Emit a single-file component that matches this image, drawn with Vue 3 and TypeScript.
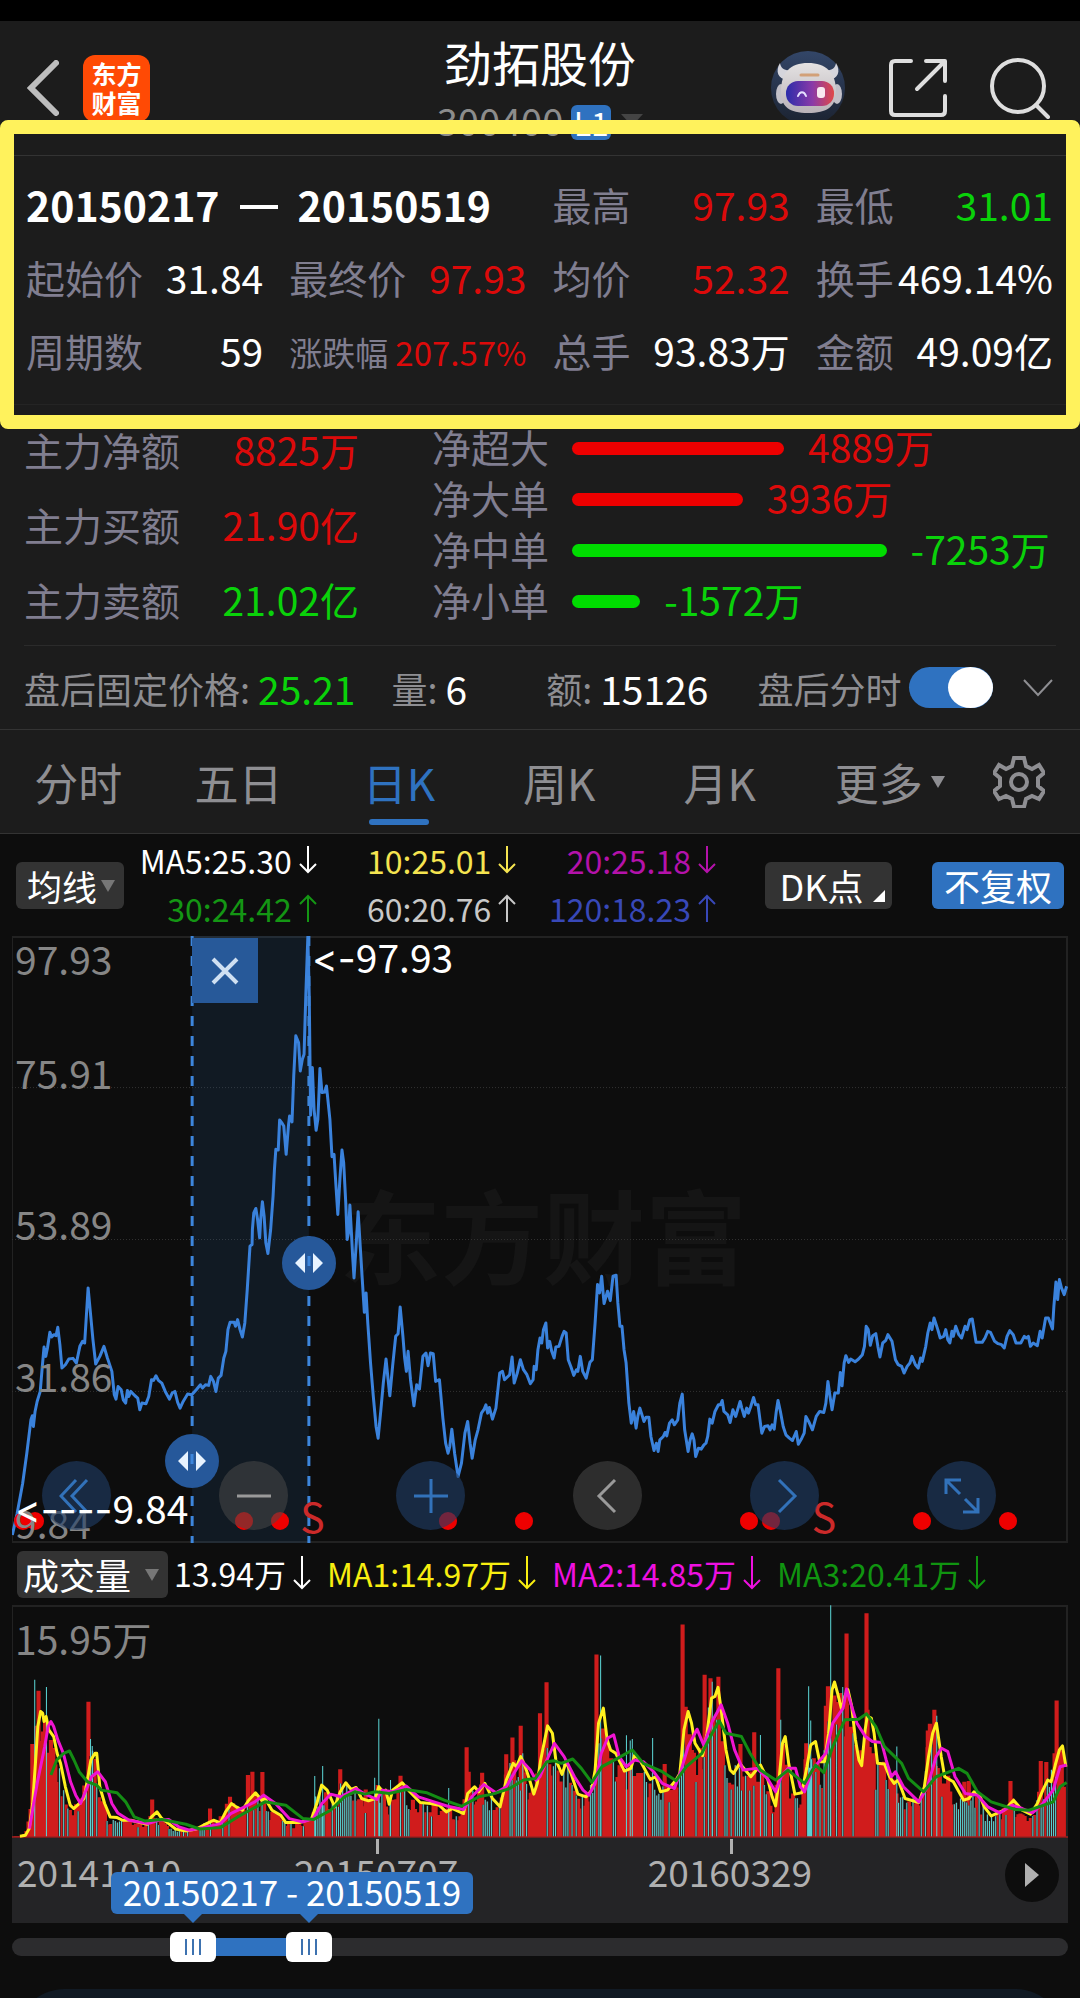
<script setup lang="ts">
import { computed, ref } from 'vue'

type Tone = 'up' | 'down' | 'plain'
interface Stat { label: string; value: string; tone: Tone; small?: boolean }
interface Flow { label: string; amount: number }
type Point = [number, number]

const stats: Stat[] = [
  { label: '最高', value: '97.93', tone: 'up' },
  { label: '最低', value: '31.01', tone: 'down' },
  { label: '起始价', value: '31.84', tone: 'plain' },
  { label: '最终价', value: '97.93', tone: 'up' },
  { label: '均价', value: '52.32', tone: 'up' },
  { label: '换手', value: '469.14%', tone: 'plain' },
  { label: '周期数', value: '59', tone: 'plain' },
  { label: '涨跌幅', value: '207.57%', tone: 'up', small: true },
  { label: '总手', value: '93.83万', tone: 'plain' },
  { label: '金额', value: '49.09亿', tone: 'plain' },
]

const mainFunds: Stat[] = [
  { label: '主力净额', value: '8825万', tone: 'up' },
  { label: '主力买额', value: '21.90亿', tone: 'up' },
  { label: '主力卖额', value: '21.02亿', tone: 'down' },
]

const flows: Flow[] = [
  { label: '净超大', amount: 4889 },
  { label: '净大单', amount: 3936 },
  { label: '净中单', amount: -7253 },
  { label: '净小单', amount: -1572 },
]
const largestFlow = Math.max(...flows.map((f) => Math.abs(f.amount)))
const flowWidth = (f: Flow) => `${(Math.abs(f.amount) / largestFlow) * 65}%`

const tabs = ['分时', '五日', '日K', '周K', '月K']
const activeTab = ref('日K')
const afterHours = ref(true)

const averages = [
  { text: 'MA5:25.30', up: false, color: '#ffffff' },
  { text: '10:25.01', up: false, color: '#f5e450' },
  { text: '20:25.18', up: false, color: '#b412aa' },
  { text: '30:24.42', up: true, color: '#149614' },
  { text: '60:20.76', up: true, color: '#c8c8c8' },
  { text: '120:18.23', up: true, color: '#3848b8' },
]
const volumeAverages = [
  { text: '13.94万', color: '#ffffff' },
  { text: 'MA1:14.97万', color: '#f8ee10' },
  { text: 'MA2:14.85万', color: '#ee10e0' },
  { text: 'MA3:20.41万', color: '#109410' },
]

const priceTicks = [
  { text: '97.93', top: 0 },
  { text: '75.91', top: 114 },
  { text: '53.89', top: 265 },
  { text: '31.86', top: 417 },
  { text: '9.84', top: 564 },
]

/* Both charts use a grid of 3066 units across; heights are 1818 and 696 units. */
const priceLine =
  '36,2115 50,2050 66,1960 78,1870 90,1770 94,1758 97,1790 102,1745 108,1715 117,1685 123,1610 128,1552 133,1580 138,1555 145,1508 150,1522 157,1515 163,1518 168,1493 174,1545 180,1615 190,1605 200,1588 212,1586 222,1600 232,1550 240,1535 246,1540 256,1375 260,1420 270,1530 278,1603 290,1580 302,1550 312,1585 325,1625 332,1695 337,1708 343,1670 352,1680 358,1710 365,1720 370,1682 374,1700 380,1685 392,1698 400,1705 406,1740 412,1720 424,1722 432,1700 440,1650 446,1652 453,1638 460,1652 470,1660 480,1685 492,1708 500,1690 508,1685 516,1718 523,1735 532,1715 545,1693 557,1695 570,1680 582,1665 588,1675 597,1665 606,1667 612,1640 620,1655 627,1685 634,1645 642,1637 650,1585 656,1565 662,1500 668,1478 680,1478 684,1490 690,1470 697,1500 704,1522 711,1480 718,1380 726,1250 732,1245 ' +
  '733,1200 737,1150 743,1137 748,1170 754,1225 757,1170 762,1117 767,1160 772,1240 778,1272 786,1200 793,1100 797,1020 801,960 808,962 812,872 818,880 824,890 831,975 838,885 841,860 848,878 853,740 859,620 867,640 872,725 878,690 883,675 888,500 894,322 898,500 902,858 907,715 912,840 918,903 923,870 926,800 929,718 935,790 943,788 948,770 958,870 964,982 970,975 975,1060 981,1155 987,1050 993,962 998,1000 1004,1120 1008,1230 1012,1210 1016,1127 1020,1200 1024,1280 1028,1345 1034,1250 1040,1147 1046,1250 1052,1350 1058,1448 1063,1390 1068,1480 1076,1600 1084,1700 1092,1790 1098,1825 1106,1740 1113,1660 1121,1588 1127,1650 1132,1698 1140,1610 1149,1520 1156,1512 1162,1432 1170,1520 1175,1585 1180,1625 1185,1565 1192,1650 1202,1728 1210,1665 1218,1678 1228,1580 1237,1570 1243,1608 1250,1570 1258,1572 1265,1655 1276,1650 1286,1765 1294,1840 1301,1870 1306,1850 1312,1798 1320,1870 1330,1940 1340,1900 1350,1810 1358,1775 1365,1840 1371,1885 1380,1830 1388,1800 1398,1750 1406,1738 1411,1725 1416,1750 1421,1733 1430,1768 1440,1735 1451,1630 1459,1625 1465,1650 1480,1635 1487,1582 1493,1660 1502,1630 1511,1590 1520,1620 1530,1635 1540,1662 1548,1650 1551,1610 1557,1620 1562,1560 ' +
  '1568,1525 1573,1540 1578,1500 1585,1480 1590,1555 1596,1535 1602,1565 1609,1585 1614,1552 1623,1550 1632,1520 1638,1505 1644,1510 1650,1590 1658,1612 1666,1637 1674,1620 1678,1625 1685,1580 1692,1625 1702,1645 1713,1598 1720,1590 1728,1480 1735,1365 1741,1390 1747,1340 1754,1422 1764,1385 1772,1413 1780,1340 1789,1337 1794,1420 1800,1490 1806,1490 1812,1560 1818,1600 1826,1720 1833,1780 1840,1745 1847,1795 1852,1760 1858,1735 1870,1775 1876,1762 1884,1762 1890,1820 1899,1862 1906,1840 1911,1865 1916,1830 1926,1820 1931,1808 1936,1818 1944,1780 1952,1770 1958,1785 1968,1770 1974,1720 1981,1693 1988,1800 1998,1865 2004,1830 2010,1812 2015,1830 2020,1880 2028,1855 2036,1858 2044,1845 2050,1840 2055,1820 2061,1768 2068,1780 2076,1745 2086,1725 2092,1725 2097,1712 2102,1745 2113,1755 2120,1778 2128,1740 2136,1760 2149,1715 2154,1735 2161,1760 2168,1735 2173,1750 2180,1730 2188,1703 2194,1725 2201,1725 2208,1780 2212,1810 2220,1790 2230,1788 2236,1800 2242,1785 2248,1798 2254,1745 2259,1712 2266,1745 2274,1790 2282,1815 2292,1825 2301,1832 2312,1805 2318,1843 2328,1825 2335,1810 2340,1760 2348,1775 2359,1800 2370,1760 2380,1745 2392,1748 2398,1720 2404,1655 2410,1700 2416,1740 2424,1690 2434,1690 2440,1628 2445,1668 2451,1600 2456,1578 2464,1598 2470,1588 2483,1596 2493,1588 2504,1575 2510,1550 2515,1490 2521,1500 2527,1547 2534,1518 2543,1512 2549,1550 2555,1582 2563,1540 2572,1532 2578,1515 2590,1535 2600,1590 2608,1605 2618,1610 2625,1630 2634,1610 2642,1600 2648,1580 2658,1605 2666,1615 2673,1585 2678,1595 2688,1550 2694,1510 2701,1480 2706,1500 2712,1465 2723,1500 2730,1525 2740,1520 2746,1500 2752,1530 2758,1540 2764,1505 2768,1520 2775,1490 2784,1515 2792,1525 2802,1490 2808,1500 2816,1470 2823,1468 2834,1538 2852,1538 2860,1525 2868,1505 2876,1508 2888,1535 2898,1542 2908,1545 2916,1555 2924,1520 2932,1503 2942,1515 2950,1540 2964,1540 2974,1520 2980,1525 2986,1520 2992,1550 3000,1540 3012,1548 3020,1505 3026,1525 3036,1465 3044,1465 3056,1498 3060,1430 3066,1357 3071,1410 3076,1350 3082,1375 3090,1395 3097,1370'

const shortAverage =
  '58,738 74,735 85,715 95,640 103,520 110,410 118,365 124,370 128,395 134,380 142,420 156,440 166,490 176,520 190,590 204,645 214,655 230,640 244,625 254,570 264,510 276,490 281,490 290,590 304,640 320,680 340,682 356,690 380,690 400,695 428,702 440,680 456,665 470,685 490,700 510,716 540,722 570,716 600,700 620,690 640,698 655,665 672,640 686,650 704,660 722,630 742,608 760,630 770,625 790,660 815,675 830,697 870,697 905,685 920,640 934,585 950,600 972,650 988,605 1004,578 1020,598 1034,592 1050,625 1070,632 1090,625 1100,590 1112,605 1120,600 1130,642 1140,600 1168,578 1190,605 1220,637 1250,640 1275,645 1296,665 1314,655 1346,670 1358,610 1378,590 1390,605 1408,580 1430,625 1452,650 1470,570 1490,520 1500,530 1512,500 1525,530 1538,570 1550,612 1560,580 1570,510 1590,408 1604,430 1614,510 1632,553 1644,515 1658,550 1678,612 1702,620 1718,600 1728,540 1738,400 1752,355 1763,450 1773,480 1788,490 1813,543 1832,535 1843,495 1858,510 1888,568 1904,560 1918,605 1938,600 1963,570 1974,550 1986,420 1998,365 2008,400 2018,460 2040,497 2053,430 2066,325 2076,320 2085,293 2094,360 2108,480 2120,540 2130,550 2148,520 2180,560 2208,525 2230,570 2242,620 2252,647 2262,570 2272,460 2280,440 2290,520 2308,612 2328,608 2343,530 2354,465 2368,455 2380,515 2394,515 2406,430 2416,300 2423,277 2432,310 2444,360 2453,320 2462,300 2473,350 2484,450 2494,510 2502,527 2512,420 2518,380 2530,385 2538,430 2548,520 2568,522 2583,560 2596,580 2608,570 2628,625 2668,637 2684,590 2696,500 2708,430 2719,400 2733,500 2743,560 2768,575 2798,630 2813,625 2828,605 2843,612 2858,650 2878,677 2898,668 2918,658 2943,630 2968,660 2992,672 3012,640 3028,600 3042,570 3052,575 3064,525 3076,480 3085,468 3095,530'
const midAverage =
  '86,715 96,650 110,570 130,470 140,410 148,395 156,410 168,450 184,490 205,575 220,615 234,640 250,600 266,560 284,545 306,575 325,640 342,668 375,690 430,700 460,690 490,688 520,710 550,720 590,712 640,700 670,670 700,655 740,635 766,615 800,640 840,685 880,695 910,685 935,640 960,612 990,620 1034,595 1060,612 1095,628 1110,600 1140,605 1180,588 1215,620 1260,635 1300,648 1346,658 1370,620 1405,583 1440,608 1470,590 1495,545 1515,512 1540,540 1556,570 1568,560 1588,510 1610,460 1638,500 1668,560 1693,600 1710,615 1728,580 1746,490 1764,445 1782,435 1798,500 1818,530 1843,510 1868,515 1898,545 1923,580 1958,595 1978,540 1998,470 2024,418 2043,465 2068,395 2094,345 2113,400 2133,480 2158,540 2198,535 2228,565 2252,605 2268,560 2288,535 2310,535 2324,590 2336,605 2358,540 2398,490 2418,400 2448,355 2458,298 2473,350 2488,400 2513,440 2533,455 2560,458 2573,510 2588,560 2600,545 2623,590 2668,635 2693,590 2718,500 2734,475 2752,485 2773,560 2803,610 2838,615 2868,650 2903,668 2938,645 2968,655 2998,668 3028,640 3058,600 3078,530 3097,525'
const longAverage =
  '148,555 165,510 185,490 202,483 215,510 230,545 254,575 280,585 295,600 340,608 365,635 390,680 420,692 470,688 540,702 580,716 640,712 690,680 770,635 830,645 880,685 910,688 960,660 1000,620 1030,605 1060,612 1090,605 1130,610 1180,598 1240,608 1290,630 1340,648 1390,620 1430,612 1480,595 1520,570 1555,565 1568,545 1588,515 1608,512 1630,520 1663,507 1688,535 1718,577 1748,530 1793,505 1836,480 1868,520 1923,545 1963,572 1993,530 2038,490 2068,430 2088,393 2108,430 2153,440 2178,490 2208,540 2252,570 2288,540 2336,580 2368,525 2392,548 2418,470 2453,390 2493,388 2516,372 2543,410 2568,470 2598,500 2618,520 2638,565 2682,605 2718,560 2783,535 2808,550 2838,605 2878,635 2948,658 2988,660 3058,635 3078,590 3097,577'

const risingPeaks: Point[] = [
  [94, 462], [106, 410], [112, 303], [148, 450], [257, 336], [442, 628], [610, 655], [668, 620], [720, 555], [733, 545], [762, 546],
  [988, 538], [1062, 598], [1163, 557], [1355, 472], [1361, 545], [1400, 548], [1470, 493], [1488, 443], [1512, 408], [1568, 370],
  [1587, 278], [1732, 195], [1748, 423], [1930, 522], [1982, 105], [2046, 255], [2063, 266], [2086, 261], [2150, 462],
  [2190, 427], [2260, 236], [2341, 460], [2398, 348], [2404, 290], [2441, 310], [2458, 132], [2516, 72], [2694, 422], [2700, 402],
  [2713, 360], [2800, 575], [2813, 573], [2934, 573], [3022, 513], [3038, 516], [3062, 490], [3068, 332],
]
const fallingPeaks: Point[] = [
  [101, 270], [135, 292], [263, 447], [268, 468], [914, 558], [937, 528], [1088, 563], [1100, 387], [1134, 570], [1303, 594],
  [1518, 490], [1744, 198], [1819, 436], [1830, 452], [1836, 447], [1895, 444], [2068, 276], [2208, 435], [2267, 390],
  [2348, 290], [2354, 392], [2412, 48], [2447, 292], [2604, 470], [2720, 378],
]

const floor = 740
const envelope: Point[] = shortAverage.split(' ').map((p) => p.split(',').map(Number) as Point)

function envelopeAt(x: number): number {
  const next = envelope.findIndex((p) => p[0] >= x)
  if (next <= 0) return next === 0 ? envelope[0][1] : envelope[envelope.length - 1][1]
  const [x0, y0] = envelope[next - 1]
  const [x1, y1] = envelope[next]
  return y0 + ((x - x0) / (x1 - x0)) * (y1 - y0)
}

/* Daily volume between the marked peaks follows the short average with a repeatable spread. */
let seed = 11
function nextRandom(): number {
  seed = (seed * 16807) % 2147483647
  return seed / 2147483647
}
const rising: Point[] = []
const falling: Point[] = []
for (let x = 41; x < 3092; x += 6) {
  const height = (floor - envelopeAt(x + 6)) * (0.6 + nextRandom() * 0.5)
  const run = Math.sin(x / 37) + Math.sin(x / 13)
  const bar: Point = [x, floor - height]
  if (x > 150 && nextRandom() < (run > 0.5 ? 0.7 : 0.22)) falling.push(bar)
  else rising.push(bar)
}
const toBars = (points: Point[], width: number) =>
  points.map(([x, y]) => `M${x - width / 2} ${floor}V${y.toFixed(0)}h${width}V${floor}z`).join('')
const risingBars = toBars([...rising, ...risingPeaks], 12)
const fallingBars = toBars([...falling, ...fallingPeaks], 3)
const fallingGaps = toBars(falling, 7)

const markers = [9, 21, 231, 267, 435, 511, 737, 759, 911, 997]
const signals = [288, 801]

const rangeStart = ref(1564)
const rangeEnd = ref(2713)
const selected = computed(() => ({
  left: `calc(23px + (100% - 46px) * ${rangeStart.value / 10000})`,
  width: `calc((100% - 46px) * ${(rangeEnd.value - rangeStart.value) / 10000})`,
}))
</script>

<template>
  <main class="page">
    <div class="status"></div>
    <header class="header">
      <div class="side">
        <button class="icon-button" aria-label="返回">
          <svg width="32" height="56" viewBox="0 0 32 56"><path d="M29 3 4 28l25 25" fill="none" stroke="#bdbdbd" stroke-width="6" stroke-linecap="round" /></svg>
        </button>
        <div class="logo"><span>东方</span><span>财富</span></div>
      </div>
      <div class="heading">
        <h1>劲拓股份</h1>
        <div class="code"><span>300400</span><b>L1</b><i class="caret"></i></div>
      </div>
      <div class="side end">
        <button class="icon-button" aria-label="智能助手">
          <svg width="76" height="76" viewBox="0 0 76 76">
            <defs>
              <linearGradient id="disc" x1="0" y1="0" x2="0" y2="1"><stop offset="0" stop-color="#334668" /><stop offset="1" stop-color="#1b2230" /></linearGradient>
              <linearGradient id="visor"><stop offset="0" stop-color="#2c2caa" /><stop offset=".55" stop-color="#8a3aa8" /><stop offset="1" stop-color="#e04848" /></linearGradient>
              <linearGradient id="shell" x1="0" y1="0" x2="0" y2="1"><stop offset="0" stop-color="#e4e2e2" /><stop offset="1" stop-color="#b9b2b8" /></linearGradient>
            </defs>
            <circle cx="38" cy="38" r="37" fill="url(#disc)" />
            <path d="M17 30C8 29 5 21 10 13c1 6 5 8 12 7zM59 30c9-1 12-9 7-17-1 6-5 8-12 7z" fill="#d5d5dc" />
            <ellipse cx="11" cy="44" rx="5" ry="10" fill="#c2c0c8" /><ellipse cx="67" cy="44" rx="5" ry="10" fill="#c2c0c8" />
            <path d="M11 41c0-18 9-28 27-28s28 10 28 28c0 16-9 22-28 22S11 57 11 41z" fill="url(#shell)" />
            <rect x="16" y="31" width="48" height="25" rx="12" fill="url(#visor)" />
            <path d="M28 46c2-5 6-5 8 0" fill="none" stroke="#e5e0ff" stroke-width="2" stroke-linecap="round" />
            <rect x="47" y="37" width="8" height="11" rx="3" fill="#f8e8f0" /><path d="M31 25h17" stroke="#d2a078" stroke-width="3" stroke-linecap="round" />
          </svg>
        </button>
        <button class="icon-button" aria-label="分享">
          <svg width="58" height="60" viewBox="0 0 58 60" fill="none" stroke="#dedede" stroke-width="4" stroke-linecap="round" stroke-linejoin="round">
            <path d="M22 3H6Q2 3 2 7v46q0 4 4 4h46q4 0 4-4V38M37 3h19v20M55 4 28 31" />
          </svg>
        </button>
        <button class="icon-button" aria-label="搜索">
          <svg width="60" height="62" viewBox="0 0 60 62" fill="none" stroke="#dedede" stroke-width="4" stroke-linecap="round">
            <circle cx="28" cy="29" r="26" /><path d="m46 48 12 12" />
          </svg>
        </button>
      </div>
    </header>

    <section class="stats">
      <div class="period"><strong>20150217</strong><i class="dash"></i><strong>20150519</strong></div>
      <div v-for="s in stats" :key="s.label" class="stat" :class="{ small: s.small }">
        <span>{{ s.label }}</span><b :class="s.tone">{{ s.value }}</b>
      </div>
    </section>

    <section class="funds">
      <div class="fund-column">
        <div v-for="f in mainFunds" :key="f.label" class="fund"><span>{{ f.label }}</span><b :class="f.tone">{{ f.value }}</b></div>
      </div>
      <div class="flow-column">
        <div v-for="f in flows" :key="f.label" class="flow" :class="f.amount > 0 ? 'up' : 'down'">
          <span>{{ f.label }}</span>
          <div class="track"><i :style="{ width: flowWidth(f) }"></i><b>{{ f.amount }}万</b></div>
        </div>
      </div>
    </section>

    <section class="after">
      <span>盘后固定价格:</span><b class="down">25.21</b>
      <span class="volume">量:</span><b>6</b>
      <span class="amount">额:</span><b>15126</b>
      <label for="after-hours">盘后分时</label>
      <input id="after-hours" v-model="afterHours" type="checkbox" class="toggle" />
      <button class="icon-button expand" aria-label="展开">
        <svg width="30" height="18" viewBox="0 0 30 18"><path d="m1 1 14 15L29 1" fill="none" stroke="#8e8e92" stroke-width="2" /></svg>
      </button>
    </section>

    <nav class="tabs">
      <button v-for="t in tabs" :key="t" :class="{ active: t === activeTab }" @click="activeTab = t">{{ t }}</button>
      <button class="more">更多<i class="caret"></i></button>
      <button class="gear" aria-label="设置">
        <svg width="52" height="52" viewBox="0 0 52 52" fill="none" stroke="#8e8e92" stroke-width="4">
          <path d="M21 2h10l2 8 6 3 7-4 5 8-6 5v8l6 5-5 8-7-3-6 3-2 8H21l-2-8-6-3-7 3-5-8 6-5v-8l-6-5 5-8 7 4 6-3z" /><circle cx="26" cy="26" r="8" />
        </svg>
      </button>
    </nav>

    <section class="charts">
      <div class="indicators">
        <div class="picker">
          <select aria-label="主图指标"><option>均线</option></select><i class="caret"></i>
        </div>
        <div class="averages">
          <span v-for="a in averages" :key="a.text" :style="{ color: a.color }">{{ a.text }}
            <svg width="18" height="28" viewBox="0 0 18 28" fill="none" stroke="currentColor" stroke-width="2"><path :d="a.up ? 'M9 28V2M1 10l8-8 8 8' : 'M9 0v26M1 18l8 8 8-8'" /></svg>
          </span>
        </div>
        <button class="chip">DK点<i class="corner"></i></button>
        <button class="chip blue">不复权</button>
      </div>

      <div class="price-chart">
        <div class="watermark">东方财富</div>
        <svg class="plot" viewBox="35 321 3066 1818" preserveAspectRatio="none">
          <path d="M35 775H3101M35 1230H3101M35 1685H3101" class="grid" />
          <rect x="558" y="321" width="339" height="1818" fill="#3272b8" fill-opacity=".13" />
          <polyline :points="priceLine" class="price" />
          <path d="M558 321V2139M897 321V2139" class="edge" />
        </svg>
        <i v-for="m in markers" :key="m" class="marker" :style="{ left: `${m / 10.56}%` }"></i>
        <span v-for="s in signals" :key="s" class="signal" :style="{ left: `${s / 10.56}%` }">S</span>
        <span v-for="t in priceTicks" :key="t.text" class="tick" :style="{ top: `${t.top}px` }">{{ t.text }}</span>
        <div class="controls">
          <button aria-label="最早"><svg viewBox="0 0 36 36"><path d="M17 2 2 18l15 16M28 2 13 18l15 16" /></svg></button>
          <button class="grey" aria-label="缩小"><svg viewBox="0 0 36 36"><path d="M1 18h34" /></svg></button>
          <button aria-label="放大"><svg viewBox="0 0 36 36"><path d="M1 18h34M18 1v34" /></svg></button>
          <button class="grey" aria-label="左移"><svg viewBox="0 0 36 36"><path d="M25 2 9 18l16 16" /></svg></button>
          <button aria-label="右移"><svg viewBox="0 0 36 36"><path d="m12 2 16 16-16 16" /></svg></button>
          <button aria-label="全屏"><svg viewBox="0 0 36 36"><path d="M2 16V2h15M3 3l13 13M34 20v14H19M33 33 21 21" /></svg></button>
        </div>
        <span class="extreme high"><i>&lt;-</i>97.93</span>
        <span class="extreme low"><i>&lt;----</i>9.84</span>
        <button class="close" aria-label="关闭区间统计"><svg width="28" height="28" viewBox="0 0 28 28"><path d="m2 2 24 24M26 2 2 26" stroke="#cfe0f2" stroke-width="4" /></svg></button>
        <button class="handle left" aria-label="区间起点"><svg width="30" height="20" viewBox="0 0 30 20"><path d="M11 0v20L1 10zM19 0v20l10-10z" fill="#e8f3ff" /><path d="M15 3v10" stroke="#3d86dc" stroke-width="3" /></svg></button>
        <button class="handle right" aria-label="区间终点"><svg width="30" height="20" viewBox="0 0 30 20"><path d="M11 0v20L1 10zM19 0v20l10-10z" fill="#e8f3ff" /><path d="M15 3v10" stroke="#3d86dc" stroke-width="3" /></svg></button>
      </div>

      <div class="volume-head">
        <div class="picker wide">
          <select aria-label="副图指标"><option>成交量</option></select><i class="caret"></i>
        </div>
        <span v-for="v in volumeAverages" :key="v.text" :style="{ color: v.color }">{{ v.text }}
          <svg width="18" height="34" viewBox="0 0 18 34" fill="none" stroke="currentColor" stroke-width="2"><path d="M9 0v32M1 24l8 8 8-8" /></svg>
        </span>
      </div>

      <div class="volume-chart">
        <svg class="plot" viewBox="35 47 3066 696" preserveAspectRatio="none">
          <path :d="risingBars" fill="#d01c1c" />
          <path :d="fallingGaps" fill="#3a2020" />
          <path :d="fallingBars" fill="#5ad2d2" />
          <path d="M35 740H3101" stroke="#a02020" stroke-width="5" />
          <polyline :points="shortAverage" class="curve" stroke="#fff01e" />
          <polyline :points="midAverage" class="curve" stroke="#f014d2" />
          <polyline :points="longAverage" class="curve" stroke="#148c14" />
        </svg>
        <span class="tick">15.95万</span>
      </div>

      <div class="axis">
        <span class="first">20141010</span>
        <span class="second">20150707</span>
        <span class="third">20160329</span>
        <button class="play" aria-label="播放"><svg width="14" height="24" viewBox="0 0 14 24"><path d="M0 0v24l14-12z" fill="#b0b0b0" /></svg></button>
        <output class="bubble" for="range-start range-end">20150217 - 20150519</output>
      </div>

      <div class="slider">
        <div class="selected" :style="selected"></div>
        <input id="range-start" v-model.number="rangeStart" type="range" min="0" max="10000" aria-label="开始日期" />
        <input id="range-end" v-model.number="rangeEnd" type="range" min="0" max="10000" aria-label="结束日期" />
      </div>
      <div class="sheet"><div></div></div>
    </section>
    <div class="frame"></div>
  </main>
</template>

<style>
body { margin: 0; background: #0d0d0d; }
</style>

<style scoped>
* { box-sizing: border-box; }
.page { position: relative; background: #1c1c1c; color: #fff; font-family: "Noto Sans CJK SC", sans-serif; font-size: 39px; overflow: hidden; }
button, select { font: inherit; color: inherit; border: 0; padding: 0; background: none; }
b { font-weight: 400; }
i { font-style: normal; }
.up { color: #dc0a0a; }
.down { color: #0ad20a; }
.plain { color: #fff; }
.caret { display: block; border: 7px solid transparent; border-top: 12px solid #777; border-bottom: 0; }
.icon-button { display: flex; }

.status { height: 21px; background: #000; }
.header { display: grid; grid-template-columns: 1fr auto 1fr; height: 135px; border-bottom: 1px solid #333; }
.side { display: flex; align-items: center; gap: 24px; padding-left: 27px; }
.side.end { justify-content: flex-end; gap: 43px; padding: 0 30px 0 0; }
.logo { display: flex; flex-direction: column; align-items: center; justify-content: center; width: 67px; height: 67px; border-radius: 12px; background: #ff4a05; font-size: 25px; font-weight: 700; line-height: 29px; }
.heading { display: flex; flex-direction: column; align-items: center; padding-top: 10px; }
h1 { margin: 0; font-size: 48px; font-weight: 400; line-height: 60px; }
.code { display: flex; align-items: center; gap: 8px; margin-top: 8px; line-height: 40px; font-size: 38px; color: #8c8c8c; }
.code b { width: 40px; height: 35px; border-radius: 6px; background: #2f72c0; color: #fff; font-size: 32px; line-height: 34px; text-align: center; margin-top: 6px; }
.code .caret { border-width: 12px 11px 0; border-top-color: #444; margin-left: 2px; }

.stats { display: grid; grid-template-columns: repeat(4, 1fr); column-gap: 26px; padding: 12px 27px 17px 26px; line-height: 73px; border-bottom: 1px solid #242424; }
.period { grid-column: span 2; display: flex; align-items: center; gap: 20px; font-size: 41px; }
.dash { width: 38px; height: 4px; background: #fff; margin-top: 4px; }
.stat, .fund { display: flex; justify-content: space-between; white-space: nowrap; }
.stat span, .fund span, .flow span { color: #807e90; }
.stat.small { font-size: 33px; line-height: 77px; height: 73px; }
.frame { position: absolute; top: 120px; left: 0; right: 0; height: 309px; border: 14px solid #fff25c; border-radius: 8px; pointer-events: none; }

.funds { display: flex; gap: 73px; margin: 0 24px; padding: 7px 0 8px; border-bottom: 1px solid #2b2b2b; }
.fund-column { width: 335px; line-height: 75px; }
.flow-column { flex: 1; line-height: 51px; padding: 9px 0 11px; }
.flow { display: flex; gap: 23px; white-space: nowrap; }
.track { flex: 1; display: flex; align-items: center; gap: 24px; }
.track i { height: 13px; margin-top: 4px; border-radius: 7px; background: #ee0000; }
.down .track i { background: #00dc00; }

.after { display: flex; align-items: center; gap: 8px; height: 84px; padding: 0 27px 0 24px; border-bottom: 1px solid #333; white-space: nowrap; }
.after span, .after label { font-size: 36px; color: #8e8e92; }
.after .volume { margin-left: 28px; }
.after .amount { margin-left: 71px; }
.after label { margin-left: 41px; }
.toggle { appearance: none; display: flex; justify-content: flex-end; width: 84px; height: 41px; margin: 0; border-radius: 21px; background: #2f72c0; }
.toggle::before { content: ""; width: 45px; height: 41px; border-radius: 50%; background: #fff; }
.toggle:not(:checked) { justify-content: flex-start; background: #555; }
.expand { margin-left: auto; }

.tabs { display: flex; height: 104px; padding-right: 24px; border-bottom: 1px solid #333; font-size: 44px; color: #8e8e92; }
.tabs button { position: relative; flex: 160; padding-right: 4px; line-height: 98px; }
.tabs .active { color: #2f72c0; }
.tabs .active::after { content: ""; position: absolute; left: 50%; bottom: 8px; width: 60px; height: 6px; margin-left: -32px; border-radius: 3px; background: #2f72c0; }
.tabs .more { flex: 180; display: flex; align-items: center; justify-content: center; gap: 8px; }
.tabs .more .caret { border-top-color: #8e8e92; }
.tabs .gear { flex: 76; display: flex; align-items: center; justify-content: center; padding: 0; }

.charts { background: #0d0d0d; }
.indicators { display: flex; align-items: center; height: 102px; padding: 0 16px; }
.picker { position: relative; width: 108px; height: 47px; line-height: 47px; }
.picker select { display: block; appearance: none; width: 100%; height: 47px; padding-left: 11px; padding-bottom: 2px; border-radius: 6px; background: #333; font-size: 35px; }
.picker .caret { position: absolute; right: 9px; top: 18px; pointer-events: none; }
.averages { flex: 1; display: grid; grid-template-columns: 193fr 200fr 200fr; padding: 0 49px 3px 0; font-size: 32px; line-height: 48px; }
.averages span { display: flex; align-items: center; justify-content: flex-end; gap: 7px; }
.chip { position: relative; width: 127px; height: 47px; padding-right: 14px; border-radius: 6px; background: #333; font-size: 36px; line-height: 42px; white-space: nowrap; }
.chip.blue { width: 132px; margin-left: 40px; padding: 0; background: #2f72c0; }
.corner { position: absolute; right: 7px; bottom: 7px; border: 6px solid #fff; border-top-color: transparent; border-left-color: transparent; }

.price-chart, .volume-chart { position: relative; margin: 0 12px; border: 2px solid #222; border-left-width: 1px; }
.price-chart { height: 607px; }
.volume-chart { height: 233px; border-bottom: 0; }
.plot { position: absolute; inset: -2px -2px -2px -1px; width: calc(100% + 3px); height: calc(100% + 4px); }
.volume-chart .plot { height: calc(100% + 2px); }
.grid { fill: none; stroke: #333; stroke-width: 1px; stroke-dasharray: 1 2; vector-effect: non-scaling-stroke; }
.price { fill: none; stroke: #3a82dc; stroke-width: 3px; stroke-linejoin: round; vector-effect: non-scaling-stroke; }
.edge { stroke: #3d86dc; stroke-width: 3px; stroke-dasharray: 10 10; vector-effect: non-scaling-stroke; }
.curve { fill: none; stroke-width: 3px; stroke-linejoin: round; vector-effect: non-scaling-stroke; }
.watermark { position: absolute; top: 225px; left: 326px; font-size: 102px; font-weight: 700; line-height: 140px; color: #151515; }
.tick { position: absolute; left: 2px; line-height: 40px; color: #868686; }
.volume-chart .tick { top: 11px; }
.marker { position: absolute; top: 574px; width: 18px; height: 18px; margin-left: -8px; border-radius: 50%; background: #ee0000; }
.signal { position: absolute; top: 555px; font-size: 41px; line-height: 44px; color: #cc2a2a; }
.extreme { position: absolute; line-height: 40px; }
.extreme i { font-family: Inter, sans-serif; font-feature-settings: "calt" 0; }
.extreme.high { top: -2px; left: 28.4%; }
.extreme.low { top: 549px; left: 2px; }
.controls { position: absolute; left: 29px; right: 70px; top: 523px; display: flex; justify-content: space-between; }
.controls button { display: flex; align-items: center; justify-content: center; width: 69px; height: 69px; border-radius: 50%; background: rgba(32, 62, 104, .6); }
.controls .grey { background: rgba(72, 72, 72, .55); }
.controls svg { width: 36px; height: 36px; fill: none; stroke: #3272ba; stroke-width: 3; }
.controls .grey svg { stroke: #9a9a9a; }
.close { position: absolute; top: 0; left: 17%; display: flex; align-items: center; justify-content: center; width: 66px; height: 65px; background: #275999; }
.handle { position: absolute; display: flex; align-items: center; justify-content: center; width: 54px; height: 54px; margin-left: -27px; border-radius: 50%; background: #26589a; }
.handle.left { top: 496px; left: 17%; }
.handle.right { top: 298px; left: 28.1%; }

.volume-head { display: flex; align-items: center; gap: 16px; height: 62px; padding-left: 17px; font-size: 32px; white-space: nowrap; }
.volume-head span { display: flex; align-items: center; gap: 7px; padding-bottom: 3px; line-height: 48px; }
.picker.wide { width: 151px; margin-right: -10px; }
.picker.wide select { padding-left: 6px; font-size: 36px; }

.axis { position: relative; height: 85px; margin: 0 12px; background: #242426; font-size: 37px; line-height: 40px; color: #b0b0b0; }
.axis span { position: absolute; top: 13px; }
.axis .first { left: 5px; }
.axis .second { left: 26.7%; }
.axis .third { left: 60.2%; }
.axis .second::before, .axis .third::before { content: ""; position: absolute; left: 50%; top: -12px; width: 3px; height: 15px; background: #b0b0b0; }
.play { position: absolute; right: 9px; top: 10px; display: flex; align-items: center; justify-content: center; width: 54px; height: 54px; border-radius: 50%; background: #0d0d0d; }
.bubble { position: absolute; left: 99px; top: 34px; width: 362px; height: 42px; border-radius: 6px; background: #2f72c0; color: #fff; font-size: 35px; line-height: 38px; text-align: center; }
.bubble::before, .bubble::after { content: ""; position: absolute; top: 42px; left: 73px; border: 9px solid transparent; border-top-color: #2f72c0; border-bottom: 0; }
.bubble::after { left: 189px; }

.slider { position: relative; height: 18px; margin: 15px 12px 33px; border-radius: 9px; background: #2c2c2e; }
.selected { position: absolute; height: 18px; background: #2f72c0; }
.slider input { position: absolute; top: -6px; left: 0; width: 100%; height: 30px; margin: 0; appearance: none; background: none; pointer-events: none; }
.slider input::-webkit-slider-thumb { appearance: none; width: 46px; height: 30px; border-radius: 6px; pointer-events: auto; background: linear-gradient(90deg, transparent 15px, #3d72b0 15px 17px, transparent 17px 22px, #3d72b0 22px 24px, transparent 24px 29px, #3d72b0 29px 31px, transparent 31px) 0 7px / 46px 16px no-repeat #fff; }
.sheet { height: 9px; margin: 0 15px; overflow: hidden; }
.sheet div { height: 100px; border-radius: 50px; background: #111a24; }
</style>
